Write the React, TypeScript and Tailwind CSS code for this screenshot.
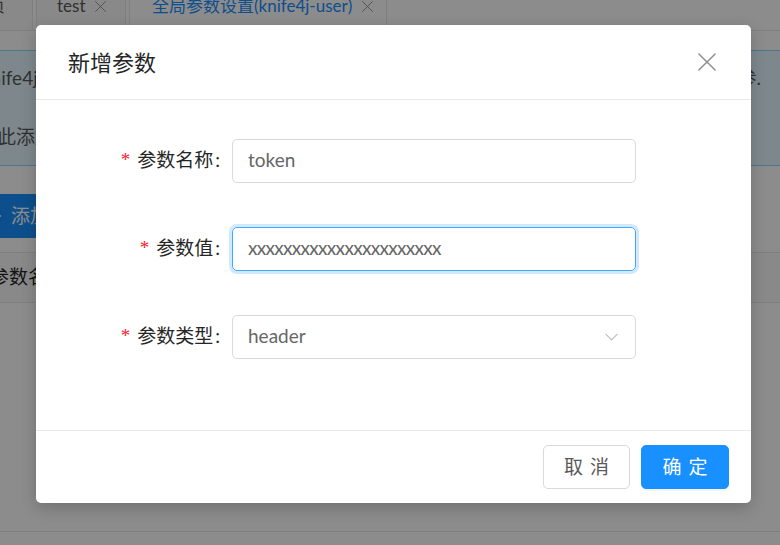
const font = "font-['Lato','Noto_Sans_CJK_SC',sans-serif]";

function Cross({ size, className }: { size: number; className?: string }) {
  return (
    <svg width={size} height={size} viewBox="0 0 20 20" className={className} fill="none" stroke="currentColor" strokeWidth={1.6} strokeLinecap="round">
      <path d="M1 1 L19 19 M19 1 L1 19" />
    </svg>
  );
}

// 页面背景（被遮罩盖住的部分）
function Page() {
  return (
    <div className="w-full h-full">
      {/* 标签栏 */}
      <div className="flex h-[31px] -ml-[47px] overflow-hidden">
        <div className="w-[80px] h-full flex justify-end pr-[27px] bg-[#fafafa] border-r border-b border-[#e8e8e8] text-[17px] leading-[17px] text-[#595959]">
          <span className="-mt-[3px]">首页</span>
        </div>
        <div className="w-[3px] border-b border-[#e8e8e8]" />
        <div className="w-[90px] h-full flex items-start gap-[10px] pl-[20px] bg-[#fafafa] border-x border-b border-[#e8e8e8] text-[17px] leading-[17px] text-[#595959]">
          <span className="-mt-[3px]">test</span>
          <Cross size={11} className="mt-[1px] text-[#8c8c8c]" />
        </div>
        <div className="w-[3px] border-b border-[#e8e8e8]" />
        <div className="w-[258px] h-full flex items-start gap-[10px] pl-[22px] bg-white border-x border-[#e8e8e8] text-[17px] leading-[17px] text-[#1890ff]">
          <span className="-mt-[3px] whitespace-nowrap">全局参数设置(knife4j-user)</span>
          <Cross size={11} className="mt-[1px] shrink-0 text-[#8c8c8c]" />
        </div>
        <div className="flex-1 border-b border-[#e8e8e8]" />
      </div>

      <div className="pt-[19px]">
        {/* 提示 */}
        <div className="-ml-[44px] -mr-[3px] h-[116px] border border-[#91d5ff] bg-[#e6f7ff] px-[21px] pt-[12px] text-[19px] text-[#595959] whitespace-nowrap">
          <div className="flex justify-between leading-[30px]">
            <span>Knife4j 提供全局参数Debug功能,目前默认提供header(请求头)</span>
            <span>两种方式的入参.</span>
          </div>
          <div className="mt-[29px] leading-[30px]">在此添加全局参数后,默认Debug调试tab页会带上该参数</div>
        </div>

        {/* 添加按钮 */}
        <button className="mt-[28px] -ml-[35px] h-[44px] px-[21px] rounded-[5px] bg-[#1890ff] text-white text-[19px] flex items-center gap-[9px]">
          <svg width="16" height="16" viewBox="0 0 16 16" stroke="currentColor" strokeWidth={1.6}>
            <path d="M8 1 V15 M1 8 H15" />
          </svg>
          添加参数
        </button>

        {/* 表格 */}
        <div className="mt-[14px] -ml-[32px]">
          <div className="h-[51px] border-y border-[#e8e8e8] bg-[#fafafa] flex items-center px-[22px] text-[19px] text-[#262626]">
            参数名称
          </div>
          <div className="h-[229px] border-b border-[#e8e8e8]" />
        </div>
      </div>
    </div>
  );
}

function Label({ text }: { text: string }) {
  return (
    <div className="w-[163px] shrink-0 flex justify-end items-center text-[19px] text-[#262626]">
      <span className="text-[#f5222d] mr-[7px] font-['Liberation_Serif',serif] text-[19px]">*</span>
      <span>{text}</span>
      <span className="ml-[2px] mr-[12px]">:</span>
    </div>
  );
}

export default function App() {
  return (
    <div className={`relative w-[780px] h-[545px] overflow-hidden bg-white ${font}`}>
      <Page />

      {/* 遮罩 + 弹窗 */}
      <div className="absolute inset-0 bg-black/45 pl-[36px] pt-[25px]">
        <div className="w-[715px] bg-white rounded-[5px] shadow-[0_5px_16px_rgba(0,0,0,0.2)]">
          <div className="h-[75px] border-b border-[#e8e8e8] flex items-center justify-between pl-[32px] pr-[35px]">
            <span className="text-[22px] text-[#262626]">新增参数</span>
            <Cross size={18} className="text-[#8c8c8c]" />
          </div>

          <div className="px-[33px] pt-[33px] pb-[33px]">
            <div className="flex items-center h-[55px] mb-[33px]">
              <Label text="参数名称" />
              <div className="w-[404px] h-[44px] border border-[#d9d9d9] rounded-[5px] px-[15px] flex items-center text-[19px] text-[#666]">
                token
              </div>
            </div>
            <div className="flex items-center h-[55px] mb-[33px]">
              <Label text="参数值" />
              <div className="w-[404px] h-[44px] border border-[#40a9ff] rounded-[5px] px-[15px] flex items-center text-[19px] text-[#666] shadow-[0_0_0_3px_rgba(24,144,255,0.2)]">
                <span className="tracking-[-0.7px]">xxxxxxxxxxxxxxxxxxxxxx</span>
              </div>
            </div>
            <div className="flex items-center h-[55px] mb-[33px]">
              <Label text="参数类型" />
              <div className="w-[404px] h-[44px] border border-[#d9d9d9] rounded-[5px] pl-[15px] pr-[17px] flex items-center justify-between text-[19px] text-[#666]">
                <span>header</span>
                <svg width="13" height="8" viewBox="0 0 13 8" fill="none" stroke="#bfbfbf" strokeWidth={1.2}>
                  <path d="M0.5 0.8 L6.5 7 L12.5 0.8" />
                </svg>
              </div>
            </div>
          </div>

          <div className="border-t border-[#e8e8e8] px-[22px] py-[14px] flex justify-end gap-[11px]">
            <button className="w-[87px] h-[44px] rounded-[5px] border border-[#d9d9d9] bg-white text-[19px] text-[#595959] tracking-[7px] pl-[7px]">
              取消
            </button>
            <button className="w-[88px] h-[44px] rounded-[5px] border border-[#1890ff] bg-[#1890ff] text-[19px] text-white tracking-[7px] pl-[7px] shadow-[0_2px_0_rgba(0,0,0,0.045)]">
              确定
            </button>
          </div>
        </div>
      </div>
    </div>
  );
}
